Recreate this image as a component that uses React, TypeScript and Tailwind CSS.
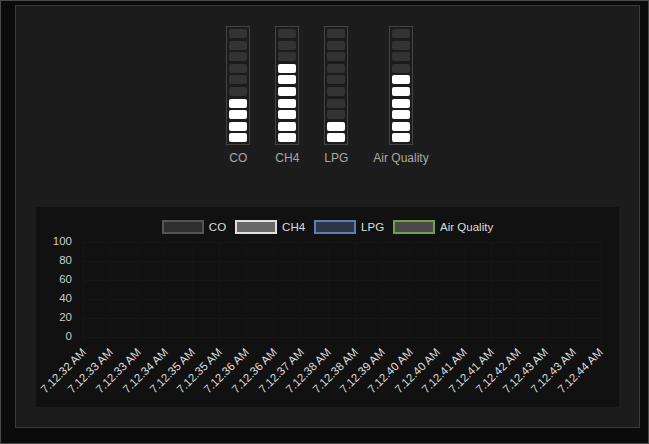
import React from 'react';

// Gas sensor dashboard: segmented level gauges + empty line chart

const gauges = [
  { label: 'CO', lit: 4 },
  { label: 'CH4', lit: 7 },
  { label: 'LPG', lit: 2 },
  { label: 'Air Quality', lit: 6 },
];

const legend = [
  { label: 'CO', box: 'border-[#555555] bg-[#2e2e2e]' },
  { label: 'CH4', box: 'border-[#e0e0e0] bg-[#686868]' },
  { label: 'LPG', box: 'border-[#5b7fb5] bg-[#2b3545]' },
  { label: 'Air Quality', box: 'border-[#6fa050] bg-[#4a4a4a]' },
];

const times = [
  '7.12.32 AM', '7.12.33 AM', '7.12.33 AM', '7.12.34 AM', '7.12.35 AM',
  '7.12.35 AM', '7.12.36 AM', '7.12.36 AM', '7.12.37 AM', '7.12.38 AM',
  '7.12.38 AM', '7.12.39 AM', '7.12.40 AM', '7.12.40 AM', '7.12.41 AM',
  '7.12.41 AM', '7.12.42 AM', '7.12.43 AM', '7.12.43 AM', '7.12.44 AM',
];

const STEP = 27.2;
const X0 = 11.5;

function Gauge({ label, lit }: { label: string; lit: number }) {
  const segs = Array.from({ length: 10 }, (_, i) => 9 - i < lit);
  return (
    <div className="flex flex-col items-center min-w-[24px]">
      <div className="w-[24px] border border-[#444444] p-[2px] flex flex-col gap-[2.6px]">
        {segs.map((on, i) => (
          <div
            key={i}
            className={`h-[9px] w-full rounded-[2px] ${on ? 'bg-white' : 'bg-[#333333]'}`}
          />
        ))}
      </div>
      <div className="mt-[7px] text-[12px] leading-[13px] text-[#a8a8a8] whitespace-nowrap">
        {label}
      </div>
    </div>
  );
}

function Grid() {
  return (
    <svg width="547" height="108" className="block">
      {[0, 1, 2, 3, 4, 5].map(i => (
        <line
          key={`h${i}`}
          x1={X0}
          x2={X0 + STEP * 19}
          y1={8.5 + i * 19}
          y2={8.5 + i * 19}
          stroke="#161616"
          strokeWidth="1"
        />
      ))}
      {times.map((_, i) => (
        <line
          key={`v${i}`}
          x1={X0 + i * STEP}
          x2={X0 + i * STEP}
          y1={8}
          y2={108}
          stroke="#161616"
          strokeWidth="1"
        />
      ))}
    </svg>
  );
}

export default function App() {
  return (
    <div
      className="w-[649px] h-[444px] bg-[#0b0b0b] border border-[#4a4a4a] pl-[14px] pt-[4px]"
      style={{ fontFamily: '"Liberation Sans", Arial, sans-serif' }}
    >
      <div className="w-[625px] h-[423px] bg-[#1c1c1c] border border-[#3a3a3a] px-[20px] pt-[20px]">
        {/* Gauges */}
        <div className="flex justify-center gap-[25px]">
          {gauges.map(g => (
            <Gauge key={g.label} label={g.label} lit={g.lit} />
          ))}
        </div>

        {/* Chart */}
        <div className="mt-[41.6px] h-[200px] bg-[#111111] pt-[13px] flex flex-col">
          <div className="h-[14px] flex justify-center items-center gap-[9px] text-[11.5px] text-[#dddddd]">
            {legend.map(l => (
              <div key={l.label} className="flex items-center gap-[5px]">
                <div className={`w-[42px] h-[14px] border-2 ${l.box}`} />
                <span className="leading-[14px]">{l.label}</span>
              </div>
            ))}
          </div>

          <div className="flex h-[108px]">
            <div className="w-[36px] pt-[1px] flex flex-col gap-[6px] text-right text-[11.5px] leading-[13px] text-[#cccccc]">
              {['100', '80', '60', '40', '20', '0'].map(v => (
                <span key={v}>{v}</span>
              ))}
            </div>
            <Grid />
          </div>

          <div className="flex flex-1 ml-[33.9px]">
            {times.map((t, i) => (
              <div key={i} className="relative w-[27.2px] h-full">
                <span className="absolute right-[12.6px] top-[2.5px] origin-right -rotate-45 whitespace-nowrap text-[11.5px] leading-[13px] text-[#dddddd]">
                  {t}
                </span>
              </div>
            ))}
          </div>
        </div>
      </div>
    </div>
  );
}
